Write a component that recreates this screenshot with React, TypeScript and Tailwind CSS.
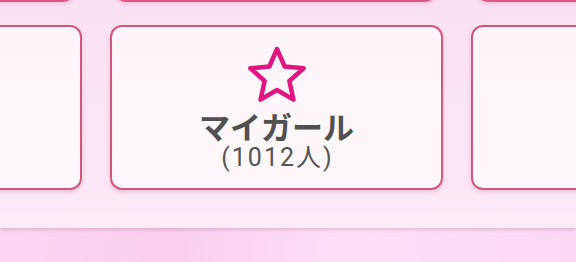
import React from "react";

function Star() {
  return (
    <svg width="64" height="64" viewBox="0 0 64 64" fill="none">
      <polygon
        points="32,5 39.64,22.48 58.63,24.35 44.36,37.02 48.46,55.65 32,46 15.54,55.65 19.64,37.02 5.37,24.35 24.36,22.48"
        stroke="#e0157f"
        strokeWidth="4.5"
        strokeLinejoin="round"
        fill="#fdf6fa"
      />
    </svg>
  );
}

const cardCls =
  "shrink-0 rounded-[12px] border-2 border-[#d1577b] bg-[linear-gradient(180deg,#fdf5fa_0%,#fdf8fb_100%)] shadow-[0_2px_4px_rgba(200,90,140,0.25)]";

export default function App() {
  return (
    <div className="w-[576px] h-[262px] overflow-hidden bg-[linear-gradient(90deg,#fcd6f0_0%,#fbcdee_30%,#fde0f6_60%,#fcd8f4_100%)] [font-family:Roboto,'Noto_Sans_CJK_JP',sans-serif]">
      <div className="h-[228px] bg-[linear-gradient(180deg,#fbe2f3_0%,#fce6f5_80%,#fdebf7_100%)] shadow-[0_2px_3px_rgba(150,90,120,0.25)] flex flex-col">
        {/* top row (cut off) */}
        <div className="flex gap-[39px] -mt-[38px] ml-[-248px]">
          <div className={`${cardCls} w-[323px] h-[40px] border-[#dc5a84]`} />
          <div className={`${cardCls} w-[323px] h-[40px] border-[#dc5a84]`} />
          <div className={`${cardCls} w-[323px] h-[40px] border-[#dc5a84]`} />
        </div>
        {/* main row */}
        <div className="flex gap-[28px] mt-[23px] ml-[-251px]">
          <div className={`${cardCls} w-[333px] h-[165px]`} />
          <div className={`${cardCls} w-[333px] h-[165px] flex flex-col items-center pt-[17px]`}>
            <Star />
            <div className="mt-[1px] text-[31px] leading-[33px] font-bold text-[#505050] [font-family:'Noto_Sans_CJK_JP',sans-serif]">
              マイガール
            </div>
            <div className="mt-[2px] pl-[2px] text-[25px] leading-[27px] tracking-[2px] text-[#555555] [font-family:Roboto,'Noto_Sans_CJK_JP',sans-serif]">
              (1012人)
            </div>
          </div>
          <div className={`${cardCls} w-[333px] h-[165px]`} />
        </div>
      </div>
    </div>
  );
}
